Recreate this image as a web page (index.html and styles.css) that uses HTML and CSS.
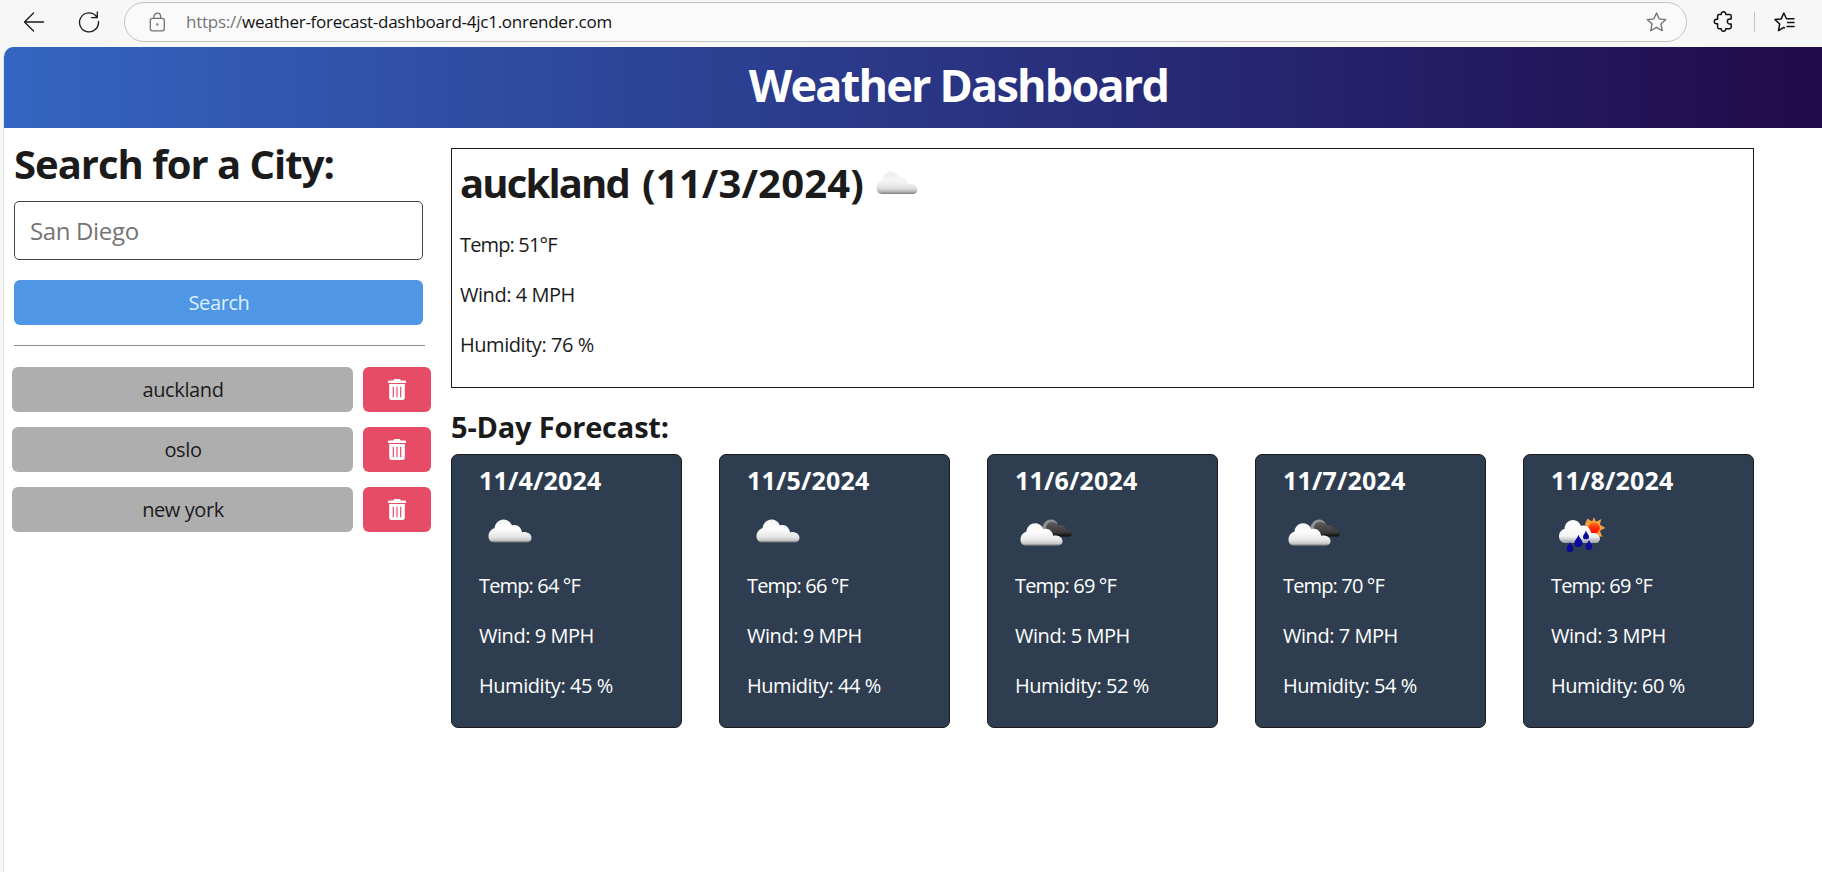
FILE: index.html
```html
<!DOCTYPE html>
<html lang="en">
<head>
<meta charset="utf-8">
<title>Weather Dashboard</title>
<link rel="stylesheet" href="styles.css">
</head>
<body>
<svg width="0" height="0" class="defs" aria-hidden="true">
  <defs>
    <linearGradient id="g-white" x1="0" y1="0" x2="0" y2="1">
      <stop offset="0" stop-color="#f4f4f4"/><stop offset=".4" stop-color="#fdfdfd"/><stop offset=".75" stop-color="#e6e6e6"/><stop offset=".9" stop-color="#c8c8c8"/><stop offset="1" stop-color="#6f6f6f"/>
    </linearGradient>
    <linearGradient id="g-today" x1="0" y1="0" x2="0" y2="1">
      <stop offset="0" stop-color="#ececec"/><stop offset=".4" stop-color="#f6f6f6"/><stop offset=".75" stop-color="#dedede"/><stop offset=".9" stop-color="#b4b4b4"/><stop offset="1" stop-color="#7c7c7c"/>
    </linearGradient>
    <linearGradient id="g-dark" x1="0" y1="0" x2="0" y2="1">
      <stop offset="0" stop-color="#5c5c5c"/><stop offset=".7" stop-color="#3d3a3a"/><stop offset="1" stop-color="#0c0c0c"/>
    </linearGradient>
    <linearGradient id="g-rain" x1="0" y1="0" x2="0" y2="1">
      <stop offset="0" stop-color="#fff"/><stop offset=".7" stop-color="#f6f6f6"/><stop offset="1" stop-color="#9aa0a8"/>
    </linearGradient>
    <linearGradient id="g-sun" x1="0" y1="0" x2="0" y2="1">
      <stop offset="0" stop-color="#ff7a1c"/><stop offset=".5" stop-color="#ff2a08"/><stop offset="1" stop-color="#ff1200"/>
    </linearGradient>
    <symbol id="cloud" viewBox="0 0 44 24">
      <path d="M6 23.500C2.800 23.500 .5 20.700 .5 17.300C.5 13 3.500 10 6.500 9.300C7 4 11 .5 15.500 .5C19.500 .5 22.500 3 24 6.500C29 5 33 8 34 13.200C38.500 12.200 43.500 14.500 43.500 18.700C43.500 21.500 41.500 23.500 38 23.500Z"/>
    </symbol>
    <symbol id="trash" viewBox="0 0 18 21">
      <path fill="#fff" fill-rule="evenodd" d="M6.200 0H11.800L12.800 1.500H17Q18 1.500 18 2.500V4H0V2.500Q0 1.500 1 1.500H5.200ZM1.200 5H16.800V18.700Q16.800 21 14.500 21H3.500Q1.200 21 1.200 18.700ZM4.700 7.800V18.200H5.900V7.800ZM8.400 7.800V18.200H9.600V7.800ZM12.100 7.800V18.200H13.300V7.800Z"/>
    </symbol>
    <symbol id="drop" viewBox="0 0 8 12">
      <path fill="#0a0a9c" d="M4 0C5 4 8 5.500 8 8.300A4 3.700 0 0 1 0 8.300C0 5.500 3 4 4 0Z"/>
    </symbol>
    <symbol id="overcast" viewBox="0 0 60 30">
      <path fill="#8d8f92" d="M24 13C24 6 28 1.500 33 1.500C37 1.500 39.500 4 40 8Z"/>
      <path fill="url(#g-dark)" d="M28 10C28.500 6 31 4 34 4C37 4 39 5.500 40.500 7.500C45 6 47.500 9 48 11.500C51 11 54 13 54 15.500C54 17.500 52.500 18.500 51 18.500H30Z"/>
      <use href="#cloud" x="2" y="4" width="43" height="25" fill="url(#g-white)"/>
    </symbol>
    <symbol id="sunrain" viewBox="0 0 48 38">
      <path fill="#f0a040" d="M36 1L37.800 5.800L43.500 3L41.800 8.500L47.500 12L41.800 14.500L44.500 21L37 19L36 23L31 18L27 8L29.500 2.500L34 5.500Z"/>
      <circle cx="36" cy="12" r="6.800" fill="#ffab3d"/><circle cx="36" cy="12" r="5.800" fill="url(#g-sun)"/>
      <path fill="url(#g-rain)" d="M7 27C3.500 27 1 24 1 20.500C1 16.500 3.500 13.500 6.500 13C6.800 7.500 10.500 4 15 4C18.500 4 21.500 6 23 10C27.500 8.500 32 11 33 17C37.500 16.500 42 18.500 42 22.500C42 25 40 27 38 27Z"/>
      <use href="#drop" x="8.500" y="25.500" width="7" height="10.500"/>
      <use href="#drop" x="16" y="18.500" width="9" height="12.500"/>
      <use href="#drop" x="25" y="14.500" width="6" height="9"/>
      <use href="#drop" x="27.500" y="23.500" width="7" height="10.500"/>
    </symbol>
  </defs>
</svg>

<div class="toolbar">
  <svg class="line" width="22" height="22" viewBox="0 0 22 22"><path d="M20.500 11H1.500M10.500 2L1.500 11L10.500 20"/></svg>
  <svg class="line reload" width="22" height="22" viewBox="0 0 22 22"><path d="M18.500 5.500A9.500 9.500 0 1 0 20.500 10.500M19.300 1V6.600H13.600"/></svg>
  <div class="address">
    <svg class="line gray" width="18" height="20" viewBox="0 0 18 20"><rect x="1.300" y="6.300" width="14" height="12.500" rx="2"/><path d="M5 6.300V4.500A3.300 3.300 0 0 1 11.600 4.500V6.300"/><circle cx="8.300" cy="12.500" r=".5"/></svg>
    <span class="url"><span class="scheme">https://</span>weather-forecast-dashboard-4jc1.onrender.com</span>
    <svg class="line gray" width="21" height="20" viewBox="0 0 21 20"><path d="M10.500 1L13.200 6.900L19.800 7.600L14.900 12L16.300 18.700L10.500 15.400L4.700 18.700L6.100 12L1.200 7.600L7.800 6.900Z"/></svg>
  </div>
  <svg class="line bold puzzle" width="20" height="21" viewBox="0 0 20 21"><path d="M6 3.500H8.200V3A2.300 2.300 0 0 1 12.800 3V3.500H16.800Q18.200 3.500 18.200 4.900V8H16.800A2.500 2.500 0 0 0 16.800 13H18.200V16.300Q18.200 17.700 16.800 17.700H12.800V18A2.300 2.300 0 0 1 8.200 18V17.700H6Q4.600 17.700 4.600 16.300V12.800H3.600A2.300 2.300 0 0 1 3.600 8.200H4.600V4.900Q4.600 3.500 6 3.500Z"/></svg>
  <span class="divider"></span>
  <svg class="line bold" width="21" height="20" viewBox="0 0 21 20"><path d="M10.500 15.800L9.800 15.400L4.500 18.700L5.700 12L1 7.600L7.200 6.900L9.800 1L12.500 6.700M13.500 6.700H20M13.500 10.500H20M13 14.400H20"/></svg>
</div>

<div class="page">
  <header class="banner"><h1>Weather Dashboard</h1></header>
  <main class="layout">
    <aside class="sidebar">
      <form class="search">
        <h2>Search for a City:</h2>
        <input class="field" type="text" placeholder="San Diego" aria-label="City">
        <button type="button" class="btn btn-search">Search</button>
      </form>
      <hr>
      <div class="history">
        <div class="row"><button class="btn btn-city">auckland</button><button class="btn btn-del" aria-label="Delete auckland"><svg width="18" height="21"><use href="#trash"/></svg></button></div>
        <div class="row"><button class="btn btn-city">oslo</button><button class="btn btn-del" aria-label="Delete oslo"><svg width="18" height="21"><use href="#trash"/></svg></button></div>
        <div class="row"><button class="btn btn-city">new york</button><button class="btn btn-del" aria-label="Delete new york"><svg width="18" height="21"><use href="#trash"/></svg></button></div>
      </div>
    </aside>
    <section class="content">
      <article class="today">
        <h2><span class="name">auckland</span> <span class="date">(11/3/2024)</span><svg class="today-icon" width="42" height="24"><use href="#cloud" fill="url(#g-today)"/></svg></h2>
        <p class="temp">Temp: 51°F</p>
        <p>Wind: 4 MPH</p>
        <p>Humidity: 76 %</p>
      </article>
      <h3>5-Day Forecast:</h3>
      <div class="cards">
        <article class="card"><h4>11/4/2024</h4><svg class="wx" width="60" height="50"><use href="#cloud" x="9" y="12" width="44" height="24" fill="url(#g-white)"/></svg><p class="temp">Temp: 64 °F</p><p>Wind: 9 MPH</p><p>Humidity: 45 %</p></article>
        <article class="card"><h4>11/5/2024</h4><svg class="wx" width="60" height="50"><use href="#cloud" x="9" y="12" width="44" height="24" fill="url(#g-white)"/></svg><p class="temp">Temp: 66 °F</p><p>Wind: 9 MPH</p><p>Humidity: 44 %</p></article>
        <article class="card"><h4>11/6/2024</h4><svg class="wx" width="60" height="50"><use href="#overcast" x="3" y="11" width="60" height="30"/></svg><p class="temp">Temp: 69 °F</p><p>Wind: 5 MPH</p><p>Humidity: 52 %</p></article>
        <article class="card"><h4>11/7/2024</h4><svg class="wx" width="60" height="50"><use href="#overcast" x="3" y="11" width="60" height="30"/></svg><p class="temp">Temp: 70 °F</p><p>Wind: 7 MPH</p><p>Humidity: 54 %</p></article>
        <article class="card"><h4>11/8/2024</h4><svg class="wx" width="60" height="50"><use href="#sunrain" x="7" y="9" width="48" height="38"/></svg><p class="temp">Temp: 69 °F</p><p>Wind: 3 MPH</p><p>Humidity: 60 %</p></article>
      </div>
    </section>
  </main>
</div>
</body>
</html>
```
FILE: styles.css
```css
*{box-sizing:border-box}
body{margin:0;height:872px;overflow:hidden;background:#f7f7f7;font-family:"Open Sans","Noto Sans",sans-serif;font-size:20px;line-height:30px;color:#1b1b1b}
h1,h2,h3,h4,p{margin:0;font-weight:700}
p{font-weight:400}
svg{display:block;flex:none}
.defs{position:absolute}

.toolbar{display:flex;align-items:center;height:47px;padding:0 0 4px 23px}
.line{fill:none;stroke:#1a1a1a;stroke-width:1.3;stroke-linecap:round;stroke-linejoin:round}
.gray{stroke:#707070}
.bold{stroke:#111;stroke-width:1.5}
.reload{margin:0 25px 0 33px}
.address{display:flex;align-items:center;width:1563px;height:40px;margin-left:-1px;padding:0 19px 0 24px;border:1px solid #c3c3c3;border-radius:20px;background:#fafafa}
.url{flex:1;margin-left:19px;font-size:17px;letter-spacing:-.25px;color:#111}
.scheme{color:#767676}
.puzzle{margin-left:26px}
.divider{width:1px;height:20px;margin:0 19px 0 21px;background:#c4c4c4}

.page{height:825px;margin-left:3px;border-left:1px solid #e0e0e0;border-top-left-radius:10px;overflow:hidden;background:#fff}
.banner{height:81px;padding-left:91px;background:linear-gradient(90deg,#3465c0,#2b3b8b 45%,#241c63 80%,#210a49);text-align:center}
.banner h1{font-size:45px;line-height:76px;letter-spacing:-1.8px;color:#fff}

.layout{display:flex}
.sidebar{width:447px;padding:14px 0 0 10px}
h2{font-size:40px;line-height:44px}
.search h2{letter-spacing:-1px}
.field{display:block;width:409px;height:59px;margin:15px 0 20px;padding:0 15px;border:1px solid #444;border-radius:5px;font:24px "Open Sans","Noto Sans",sans-serif;letter-spacing:-.35px}
.field::placeholder{color:#757575}
.btn{height:45px;padding:1px 0 0 1px;border:0;border-radius:6px;font:20px/44px "Open Sans","Noto Sans",sans-serif;letter-spacing:-.4px;color:#1b1b1b}
.btn-search{display:block;width:409px;background:#4f96e5;color:#dcf0fb}
hr{width:411px;height:1px;margin:20px 0 21px;border:0;background:#8c8c8c}
.history{display:grid;gap:15px;margin-left:-2px}
.row{display:flex;gap:10px}
.btn-city{width:341px;background:#aeaeae}
.btn-del{display:flex;justify-content:center;width:68px;padding:12px 0 0;background:#e64c66}

.content{width:1303px;padding-top:20px}
.today{height:240px;padding:12px 8px;border:1px solid #1b1b1b}
.today h2{display:flex}
.name{letter-spacing:-1.85px}
.date{margin-left:13px;letter-spacing:.15px}
.today-icon{margin:10px 0 0 12px}
.today p{margin-top:20px;letter-spacing:-.45px}
.today h2+p{margin-top:25px}
.today p.temp,.card p.temp{letter-spacing:-.85px}
h3{margin-top:23px;font-size:29px;line-height:32px;letter-spacing:-.2px}
.cards{display:flex;gap:37px;margin-top:11px}
.card{flex:none;width:231px;height:274px;padding:10px 27px;border:1px solid #1b1b1b;border-radius:7px;background:#2e3e50;color:#fff}
.card h4{font-size:25px;line-height:30px;letter-spacing:.2px}
.wx{margin:12px 0 14px}
.card p{margin-bottom:20px;letter-spacing:-.45px}
```
